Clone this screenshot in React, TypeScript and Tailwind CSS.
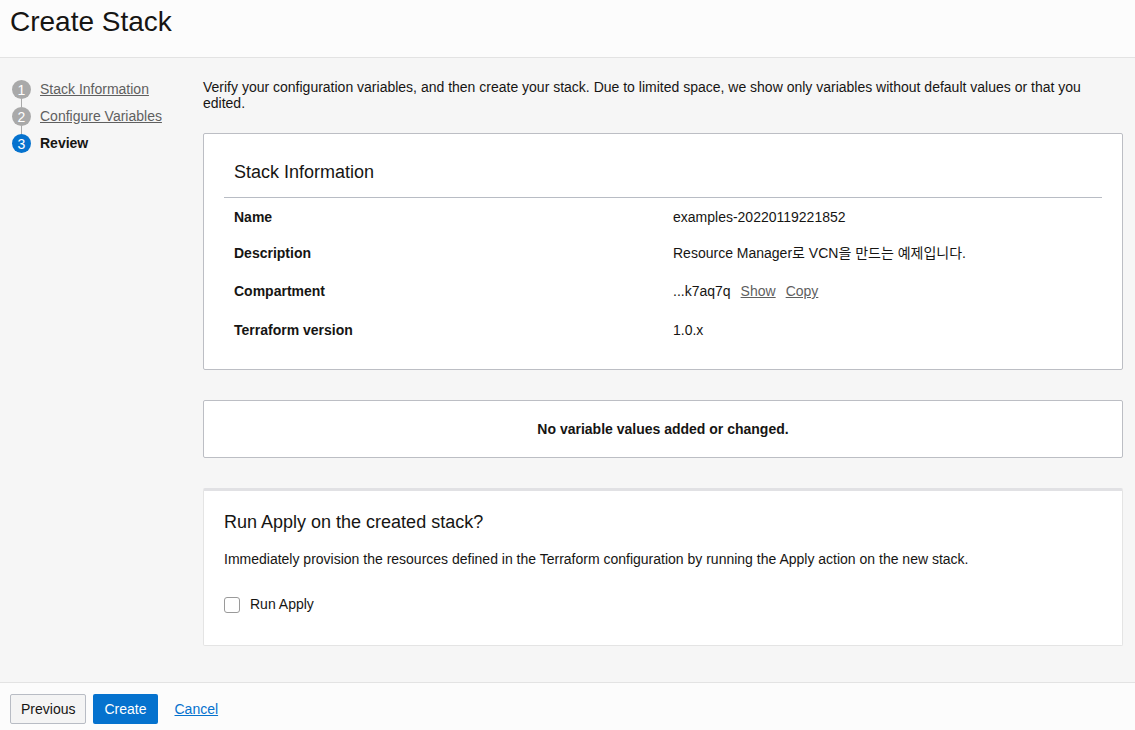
function Step({ num, label, active, last }: { num: number; label: string; active?: boolean; last?: boolean }) {
  return (
    <div className="flex items-start">
      <div className="flex flex-col items-center w-[19px]">
        <span
          className={`w-[19px] h-[19px] rounded-full flex items-center justify-center text-[14px] text-white leading-none ${
            active ? "bg-[#0572ce]" : "bg-[#a9a9a9]"
          }`}
        >
          {num}
        </span>
        {!last && <span className="w-px h-[8px] bg-[#a9a9a9]" />}
      </div>
      {active ? (
        <span className="ml-[9px] text-[14px] leading-[19px] font-bold text-[#161513]">{label}</span>
      ) : (
        <a className="ml-[9px] text-[14px] leading-[19px] text-[#5f5f5f] underline">{label}</a>
      )}
    </div>
  );
}

function InfoRow({ label, children, h }: { label: string; children: React.ReactNode; h: string }) {
  return (
    <div className={`flex items-center ${h}`}>
      <div className="w-[449px] pl-[10px] font-bold text-[14px] text-[#161513]">{label}</div>
      <div className="text-[14px] text-[#161513]">{children}</div>
    </div>
  );
}

export default function App() {
  return (
    <div
      className="w-[1135px] h-[730px] flex flex-col bg-[#f6f6f6] text-[#161513] overflow-hidden"
      style={{ fontFamily: '"Liberation Sans", Arial, "Noto Sans CJK KR", sans-serif' }}
    >
      <header className="h-[58px] shrink-0 bg-[#fcfcfc] border-b border-[#e3e3e3] px-[10px] flex items-start pt-[5px]">
        <h1 className="text-[28px] leading-[34px] text-[#161513]">Create Stack</h1>
      </header>

      <div className="flex-1 flex min-h-0">
        <nav className="w-[203px] shrink-0 pl-[12px] pt-[22px]">
          <Step num={1} label="Stack Information" />
          <Step num={2} label="Configure Variables" />
          <Step num={3} label="Review" active last />
        </nav>

        <main className="w-[920px] pt-[21px]">
          <p className="text-[14px] leading-[16px] text-[#161513]">
            Verify your configuration variables, and then create your stack. Due to limited space, we show only variables without default values or that you edited.
          </p>

          <section className="mt-[22px] bg-white border border-[#bcbec4] rounded-[2px] h-[237px] px-[20px] pt-[26px]">
            <h2 className="px-[10px] text-[18px] leading-[24px] text-[#161513]">Stack Information</h2>
            <div className="mt-[13px] border-t border-[#b8bcc4]" />
            <div className="pt-[1px]">
              <InfoRow label="Name" h="h-[36px]">examples-20220119221852</InfoRow>
              <InfoRow label="Description" h="h-[37px]">Resource Manager로 VCN을 만드는 예제입니다.</InfoRow>
              <InfoRow label="Compartment" h="h-[39px]">
                <span>...k7aq7q</span>
                <a className="ml-[10px] text-[#5f5f5f] underline">Show</a>
                <a className="ml-[10px] text-[#5f5f5f] underline">Copy</a>
              </InfoRow>
              <InfoRow label="Terraform version" h="h-[39px]">1.0.x</InfoRow>
            </div>
          </section>

          <section className="mt-[30px] bg-white border border-[#bcbec4] rounded-[2px] h-[58px] flex items-center justify-center">
            <span className="font-bold text-[14px] text-[#161513]">No variable values added or changed.</span>
          </section>

          <section className="mt-[30px] bg-white border border-[#e4e4e4] border-t-[3px] border-t-[#e1e1e4] rounded-[2px] h-[158px] px-[20px] pt-[19px]">
            <h2 className="text-[18px] leading-[24px] text-[#161513]">Run Apply on the created stack?</h2>
            <p className="mt-[17px] text-[14px] leading-[16px] text-[#161513]">
              Immediately provision the resources defined in the Terraform configuration by running the Apply action on the new stack.
            </p>
            <label className="mt-[27px] flex items-center">
              <span className="w-[16px] h-[16px] border border-[#9a9a9a] rounded-[3px] bg-white" />
              <span className="ml-[10px] text-[14px] text-[#161513]">Run Apply</span>
            </label>
          </section>
        </main>
      </div>

      <footer className="h-[48px] shrink-0 bg-[#fcfcfc] border-t border-[#e3e3e3] px-[10px] pt-[11px] flex items-start">
        <button className="h-[30px] px-[10px] border border-[#b8bcc4] bg-[#f4f4f4] rounded-[2px] text-[14px] text-[#161513]">
          Previous
        </button>
        <button className="ml-[7px] h-[30px] px-[11px] bg-[#0572ce] rounded-[2px] text-[14px] text-white">Create</button>
        <a className="ml-[17px] h-[30px] flex items-center text-[14px] text-[#0572ce] underline">Cancel</a>
      </footer>
    </div>
  );
}
